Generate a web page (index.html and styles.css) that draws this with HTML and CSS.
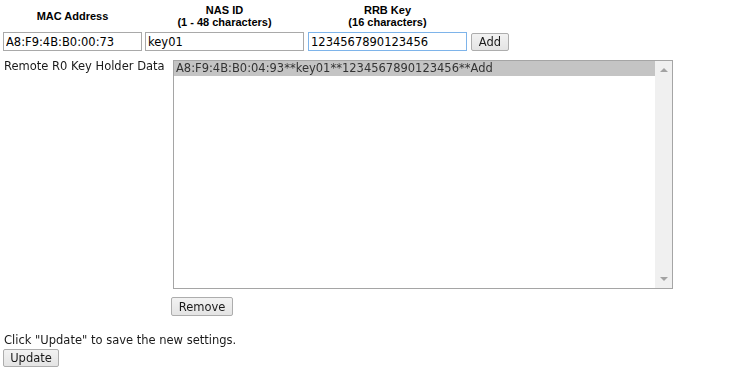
FILE: index.html
```html
<!DOCTYPE html>
<html lang="en">
<head>
  <meta charset="UTF-8" />
  <title>Remote R0 Key Holder</title>
  <link rel="stylesheet" href="styles.css">
</head>
<body>

  <!-- ===== KEY ENTRY ===== -->
  <div class="key-form">
    <div class="col-head">MAC Address</div>
    <div class="col-head">NAS ID<br>(1 - 48 characters)</div>
    <div class="col-head">RRB Key<br>(16 characters)</div>
    <div></div>

    <input type="text" class="field field-mac" value="A8:F9:4B:B0:00:73">
    <input type="text" class="field field-nas" value="key01">
    <input type="text" class="field field-rrb focused" value="1234567890123456" autofocus>
    <div><button class="btn btn-add">Add</button></div>
  </div>

  <!-- ===== KEY HOLDER LIST ===== -->
  <div class="holder">
    <div class="holder-label">Remote R0 Key Holder Data</div>
    <div class="holder-side">
      <div class="listbox">
        <div class="list-items">
          <div class="list-item selected">A8:F9:4B:B0:04:93**key01**1234567890123456**Add</div>
        </div>
        <div class="list-scroll">
          <span class="arrow arrow-up"></span>
          <span class="arrow arrow-down"></span>
        </div>
      </div>
      <button class="btn btn-remove">Remove</button>
    </div>
  </div>

  <!-- ===== SAVE ===== -->
  <div class="save">
    <p>Click &quot;Update&quot; to save the new settings.</p>
    <button class="btn btn-update">Update</button>
  </div>

</body>
</html>
```

FILE: styles.css
```css
* {
  box-sizing: border-box;
  margin: 0;
  padding: 0;
}

body {
  font-family: "DejaVu Sans", Verdana, sans-serif;
  font-size: 11.5px;
  color: #1a1a1a;
  background-color: #fff;
  padding: 4px 0 0 3px;
}

.key-form {
  display: grid;
  grid-template-columns: 142px 163px 163px auto;
  row-gap: 4px;
  align-items: center;
}

.col-head {
  width: 139px;
  font-family: "Liberation Sans", Arial, sans-serif;
  font-weight: bold;
  font-size: 11px;
  line-height: 12px;
  text-align: center;
  color: #000;
}

.col-head + .col-head {
  width: 159px;
}

.field {
  height: 19px;
  padding: 0 2px;
  border: 1px solid #a9a9a9;
  font-family: "DejaVu Sans", Verdana, sans-serif;
  font-size: 11.5px;
  color: #000;
  background: #fff;
  outline: none;
  caret-color: #000;
}

.field-mac {
  width: 139px;
}

.field-nas, .field-rrb {
  width: 159px;
}

.field.focused {
  border-color: #7eb4ea;
}

.btn {
  font-family: "DejaVu Sans", Verdana, sans-serif;
  font-size: 11.5px;
  color: #1a1a1a;
  height: 18px;
  padding: 0 6px;
  border: 1px solid #adadad;
  border-radius: 2px;
  background: linear-gradient(#f2f2f2, #e4e4e4);
  cursor: pointer;
}

.btn-add {
  width: 38px;
  margin-top: 1px;
}

.holder {
  display: flex;
  margin-top: 9px;
}

.holder-label {
  width: 168px;
  padding-left: 1px;
  line-height: 13px;
}

.holder-side {
  display: flex;
  flex-direction: column;
  align-items: flex-start;
  gap: 8px;
}

.listbox {
  display: flex;
  width: 500px;
  height: 229px;
  margin-left: 2px;
  border: 1px solid #a5a5a5;
  background: #fff;
}

.list-items {
  flex: 1;
}

.list-item {
  height: 15px;
  line-height: 15px;
  padding-left: 2px;
  color: #333;
}

.list-item.selected {
  background-color: #c4c4c4;
}

.list-scroll {
  width: 17px;
  background-color: #f0f0f0;
  display: flex;
  flex-direction: column;
  justify-content: space-between;
  align-items: center;
  padding: 7px 0;
}

.arrow {
  width: 0;
  height: 0;
  border-left: 4px solid transparent;
  border-right: 4px solid transparent;
}

.arrow-up {
  border-bottom: 4px solid #a3a3a3;
}

.arrow-down {
  border-top: 4px solid #a3a3a3;
}

.btn-remove {
  width: 62px;
  height: 19px;
}

.save {
  margin-top: 18px;
}

.save p {
  padding-left: 1px;
  line-height: 13px;
  margin-bottom: 2px;
}

.btn-update {
  width: 56px;
}
```
